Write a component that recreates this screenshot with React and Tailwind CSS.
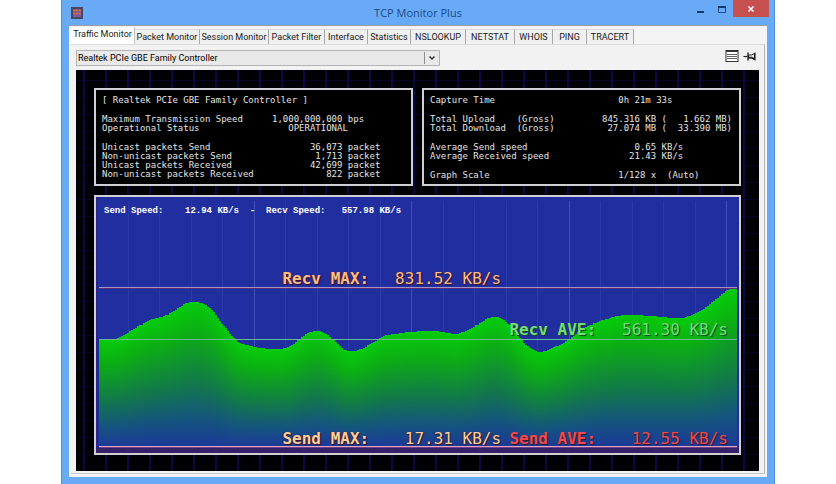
import { useState } from 'react';

const TABS = [
  { name: 'Traffic Monitor', width: 'w-[64px]' },
  { name: 'Packet Monitor', width: 'w-[65px]' },
  { name: 'Session Monitor', width: 'w-[69px]' },
  { name: 'Packet Filter', width: 'w-[56px]' },
  { name: 'Interface', width: 'w-[43px]' },
  { name: 'Statistics', width: 'w-[43px]' },
  { name: 'NSLOOKUP', width: 'w-[55px]' },
  { name: 'NETSTAT', width: 'w-[49px]' },
  { name: 'WHOIS', width: 'w-[38px]' },
  { name: 'PING', width: 'w-[34px]' },
  { name: 'TRACERT', width: 'w-[47px]' },
];

// Values are padded like console output so the columns line up
const ADAPTER_STATS = [
  [['[ Realtek PCIe GBE Family Controller ]', '']],
  [
    ['Maximum Transmission Speed', '1,000,000,000 bps'],
    ['Operational Status', '   OPERATIONAL'],
  ],
  [
    ['Unicast packets Send', '       36,073 packet'],
    ['Non-unicast packets Send', '        1,713 packet'],
    ['Unicast packets Received', '       42,699 packet'],
    ['Non-unicast packets Received', '          822 packet'],
  ],
];

const CAPTURE_STATS = [
  [['Capture Time', '   0h 21m 33s']],
  [
    ['Total Upload    (Gross)', '845.316 KB (   1.662 MB)'],
    ['Total Download  (Gross)', ' 27.074 MB (  33.390 MB)'],
  ],
  [
    ['Average Send speed', '      0.65 KB/s'],
    ['Average Received speed', '     21.43 KB/s'],
  ],
  [['Graph Scale', '   1/128 x  (Auto)']],
];

// [x, y] samples of the received traffic curve, in chart units
const CURVE = [
  [3, 143], [19, 143], [26, 140], [41, 131], [54, 123], [71, 118], [84, 110], [91, 106],
  [98, 105], [105, 106], [115, 112], [124, 124], [132, 135], [141, 145], [151, 149],
  [164, 152], [184, 153], [194, 150], [204, 143], [212, 137], [220, 135], [228, 137],
  [239, 145], [247, 153], [256, 155], [265, 153], [276, 147], [288, 140], [299, 138],
  [314, 136], [339, 135], [359, 138], [367, 136], [379, 130], [389, 123], [397, 120],
  [406, 122], [414, 129], [424, 142], [434, 152], [444, 156], [456, 152], [469, 146],
  [484, 135], [499, 126], [514, 121], [529, 118], [554, 119], [584, 121], [596, 118],
  [609, 111], [619, 103], [629, 95], [637, 91], [642, 90],
];

function slopeAt(i) {
  const [xa, ya] = CURVE[Math.max(0, i - 1)];
  const [xb, yb] = CURVE[Math.min(CURVE.length - 1, i + 1)];
  return (yb - ya) / (xb - xa);
}

// Cubic interpolation between the samples
function curveAt(x) {
  const i = Math.max(1, CURVE.findIndex(([px]) => px >= x));
  const [x0, y0] = CURVE[i - 1];
  const [x1, y1] = CURVE[i];
  const w = x1 - x0;
  const t = (x - x0) / w;
  return (
    (2 * t ** 3 - 3 * t ** 2 + 1) * y0 +
    (t ** 3 - 2 * t ** 2 + t) * w * slopeAt(i - 1) +
    (3 * t ** 2 - 2 * t ** 3) * y1 +
    (t ** 3 - t ** 2) * w * slopeAt(i)
  );
}

const BARS = Array.from({ length: 319 }, (_, i) => {
  const x = 3 + i * 2;
  return { x, y: Math.round(curveAt(x + 1)) };
});

const GRID = Array.from({ length: 20 }, (_, i) => ({
  x: Math.round((i + 1) * 31.5),
  major: (i + 1) % 5 === 0,
}));

function TitleBar() {
  return (
    <header className="relative flex h-[25px] items-center justify-center">
      <svg className="absolute top-[7px] left-0.5 h-3 w-3" viewBox="0 0 12 12" aria-hidden="true">
        <rect x="0" y="0" width="12" height="12" fill="#4a4660" />
        <rect x="2" y="2" width="8" height="8" fill="#9a5a78" />
        <path d="M2 3.5h8M2 6.5h8" stroke="#c07a4c" strokeWidth="1" />
        <path d="M2 9h8" stroke="#6a62b0" strokeWidth="1.5" />
        <path d="M4.5 2v8M7.5 2v8" stroke="#7a5a98" strokeWidth="0.6" />
      </svg>
      <h1 className="font-['Open_Sans',sans-serif] text-[11px] leading-4 text-[#194b86]">TCP Monitor Plus</h1>
      <div className="absolute top-0 -right-0.5 flex h-[17px]">
        <button type="button" aria-label="Minimize" className="flex w-[22px] items-center justify-center">
          <svg className="h-3 w-3" viewBox="0 0 12 12">
            <rect x="3" y="8" width="7" height="2" fill="#123a70" />
          </svg>
        </button>
        <button type="button" aria-label="Maximize" className="flex w-[22px] items-center justify-center">
          <svg className="h-3 w-3" viewBox="0 0 12 12">
            <path d="M2.5 3.5h7v6h-7z" fill="none" stroke="#1d4a86" />
            <rect x="2" y="3" width="8" height="2" fill="#123a70" />
          </svg>
        </button>
        <button type="button" aria-label="Close" className="flex w-[36px] items-center justify-center bg-[#c5504f]">
          <svg className="h-2.5 w-2.5" viewBox="0 0 10 10">
            <path d="M2.5 2.5l5 5M7.5 2.5l-5 5" stroke="#fff" strokeWidth="1.5" />
          </svg>
        </button>
      </div>
    </header>
  );
}

function Tabs({ active, onSelect }) {
  return (
    <div role="tablist" className="flex h-[18px] items-end pt-px pl-0.5">
      {TABS.map((tab) => (
        <button
          key={tab.name}
          type="button"
          role="tab"
          aria-selected={tab.name === active}
          onClick={() => onSelect(tab.name)}
          className={`${tab.width} flex justify-center border-r whitespace-nowrap ${
            tab.name === active
              ? 'h-[17px] items-start border-[#c4c4c4] bg-white pt-px'
              : 'h-[15px] items-center border-t border-[#a8a8a8] border-t-[#dcdcdc] bg-[#f0f0f0]'
          }`}
        >
          {tab.name}
        </button>
      ))}
    </div>
  );
}

function Toolbar() {
  return (
    <div className="flex h-[25px] items-center justify-between pr-0.5">
      <div className="relative flex h-4 w-[364px]">
        <select
          aria-label="Network adapter"
          className="h-4 w-full appearance-none border border-[#b4b4b4] bg-[#e9e9e9] pr-5 pl-px leading-[14px] text-black"
        >
          <option>Realtek PCIe GBE Family Controller</option>
        </select>
        <span className="pointer-events-none absolute inset-y-0.5 right-0.5 flex w-[14px] items-center justify-center border-l border-[#8e8e8e]">
          <svg className="h-2 w-2" viewBox="0 0 8 8">
            <path d="M1.5 2.5L4 5l2.5-2.5" fill="none" stroke="#333" strokeWidth="1.5" />
          </svg>
        </span>
      </div>
      <div className="flex items-center gap-1 pb-1">
        <button type="button" aria-label="Show log">
          <svg className="h-3 w-[14px]" viewBox="0 0 14 12">
            <rect x="1" y="0.5" width="12" height="11" fill="#fff" stroke="#333" />
            <rect x="1" y="0" width="12" height="2" fill="#333" />
            <path d="M2 4.5h10M2 6.5h10M2 8.5h10" stroke="#666" />
          </svg>
        </button>
        <button type="button" aria-label="Always on top">
          <svg className="h-3 w-[14px]" viewBox="0 0 14 12">
            <path d="M0.5 6.5h4" stroke="#222" strokeWidth="1.2" />
            <path d="M5 2.5v8" stroke="#222" strokeWidth="1.4" />
            <path d="M5.5 5h3l3-1.5v6L8.500 8h-3z" fill="#eee" stroke="#222" />
            <path d="M5.500 7.500h3l3 1.500" fill="none" stroke="#222" strokeWidth="1.500" />
            <path d="M12 2.500v8" stroke="#222" strokeWidth="1.200" />
          </svg>
        </button>
      </div>
    </div>
  );
}

function StatsBox({ groups, labelWidth }) {
  return (
    <section className="flex h-[98px] min-w-0 flex-1 flex-col gap-2.5 border-2 border-[#cfcfd4] bg-black px-1.5 pt-1.5 font-['DejaVu_Sans_Mono',monospace] text-[9px] leading-[9px] text-[#e4e4e4]">
      {groups.map((rows, i) => (
        <dl key={i}>
          {rows.map(([label, value]) => (
            <div key={label} className="flex whitespace-pre">
              <dt className={value ? labelWidth : ''}>{label}</dt>
              {value && <dd>{value}</dd>}
            </div>
          ))}
        </dl>
      ))}
    </section>
  );
}

function Reading({ label, value, color, position }) {
  return (
    <p
      className={`${position} ${color} absolute flex w-[34%] justify-between font-['DejaVu_Sans_Mono',monospace] text-[16px] leading-5 whitespace-pre`}
    >
      <span className="font-bold">{label}</span>
      <span>{value}</span>
    </p>
  );
}

function TrafficGraph() {
  return (
    <section className="relative mt-[9px] flex min-h-[200px] flex-1 border-2 border-[#cfcfd4] bg-[#202ea0]">
      <svg className="absolute inset-0 h-full w-full" viewBox="0 0 643 257" preserveAspectRatio="none" shapeRendering="crispEdges">
        <defs>
          <linearGradient id="bar" x1="0" y1="0" x2="0" y2="1">
            <stop offset="0" stopColor="#06cc0a" />
            <stop offset="0.22" stopColor="#0cae14" />
            <stop offset="0.56" stopColor="#127a48" />
            <stop offset="0.8" stopColor="#14567c" />
            <stop offset="1" stopColor="#1b3a98" />
          </linearGradient>
        </defs>
        {GRID.map(({ x, major }) => (
          <rect key={x} x={x} y="4" width="1" height="247" fill={major ? '#3e4fba' : '#2a3aaa'} />
        ))}
        {BARS.map(({ x, y }) => (
          <rect key={x} x={x} y={y} width="2" height={250 - y} fill="url(#bar)" />
        ))}
        <rect x="0" y="0" width="2" height="257" fill="#2b2580" />
        <rect x="0" y="252" width="643" height="5" fill="#35206a" />
        <rect x="3" y="90" width="638" height="1" fill="#a795c0" />
        <rect x="3" y="91" width="638" height="1" fill="#5a2a78" />
        <rect x="3" y="143" width="638" height="1" fill="#6cb894" />
        <rect x="3" y="250" width="638" height="1" fill="#d8a8c4" />
        <rect x="3" y="251" width="638" height="1" fill="#7a3a80" />
      </svg>
      <p className="absolute top-2 left-2 font-['Liberation_Mono',monospace] text-[9px] leading-3 font-bold whitespace-pre text-white">
        {'Send Speed:    12.94 KB/s  -  Recv Speed:   557.98 KB/s'}
      </p>
      <Reading
        label="Recv MAX:"
        value="831.52 KB/s"
        position="top-[28%] left-[29%]"
        color="text-[#f6bd86] [text-shadow:1px_1px_1px_#3a1024,-1px_0_1px_#5a2040]"
      />
      <Reading
        label="Recv AVE:"
        value="561.30 KB/s"
        position="top-[48%] right-[11px]"
        color="text-[#74dc74] [text-shadow:1px_1px_1px_#0b4a20]"
      />
      <Reading
        label="Send MAX:"
        value="17.31 KB/s"
        position="bottom-1 left-[29%]"
        color="text-[#f6d09a] [text-shadow:1px_1px_1px_#3a1024,-1px_0_1px_#4a2040]"
      />
      <Reading
        label="Send AVE:"
        value="12.55 KB/s"
        position="bottom-1 right-[11px]"
        color="text-[#f2484c] [text-shadow:1px_1px_1px_#3a1024]"
      />
    </section>
  );
}

export default function App() {
  const [active, setActive] = useState('Traffic Monitor');

  return (
    <div className="flex min-h-screen bg-white px-[61px]">
      <div className="flex min-w-0 flex-1 flex-col border-x border-[#4f8fdc] bg-[#69aaf6] px-[7px] pb-[7px]">
        <TitleBar />
        <main className="flex flex-1 flex-col border-t border-[#9a9fa6] bg-[#f4f4f4] px-0.5 pb-[3px] font-['Liberation_Sans_Narrow','Roboto',sans-serif] text-[9px] leading-3 text-[#1a1a1a]">
          <div className="-mx-0.5">
            <Tabs active={active} onSelect={setActive} />
          </div>
          <div className="flex flex-1 flex-col border-t border-r border-b border-t-[#dadada] border-r-[#b8b8b8] border-b-[#c8c8c8] bg-[#f2f2f2] px-[5px] pb-0.5">
            <Toolbar />
            <div className="flex flex-1 flex-col bg-[#000004] bg-[linear-gradient(90deg,transparent_7px,#0a0a40_7px,#0a0a40_9px,transparent_9px),linear-gradient(180deg,transparent_10px,#050524_10px,#050524_11px,transparent_11px)] bg-[size:22px_100%,100%_17px] px-[18px] pt-[18px] pb-4">
              <div className="flex gap-[9px]">
                <StatsBox groups={ADAPTER_STATS} labelWidth="w-[170px]" />
                <StatsBox groups={CAPTURE_STATS} labelWidth="w-[172px]" />
              </div>
              <TrafficGraph />
            </div>
          </div>
        </main>
      </div>
    </div>
  );
}
